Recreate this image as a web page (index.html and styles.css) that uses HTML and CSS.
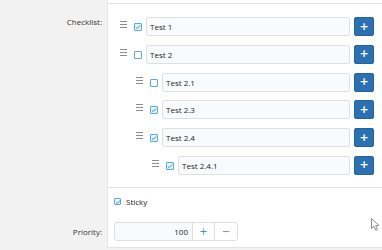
FILE: index.html
```html
<!DOCTYPE html>
<html>
<head>
<meta charset="utf-8">
<link rel="stylesheet" href="styles.css">
</head>
<body>
<div class="form">
  <div class="label"></div>
  <div class="field top-strip"></div>

  <div class="label label-checklist">Checklist:</div>
  <div class="field checklist-field">
    <div class="item lvl0">
      <span class="handle"><i></i><i></i><i></i></span>
      <span class="cb checked"><svg viewBox="0 0 8 8"><path d="M1.8 4.2 L3.3 5.6 L6.2 2.4"/></svg></span>
      <span class="text-input">Test 1</span>
      <button class="add">+</button>
    </div>
    <div class="item lvl0">
      <span class="handle"><i></i><i></i><i></i></span>
      <span class="cb"></span>
      <span class="text-input">Test 2</span>
      <button class="add">+</button>
    </div>
    <div class="item lvl1">
      <span class="handle"><i></i><i></i><i></i></span>
      <span class="cb"></span>
      <span class="text-input">Test 2.1</span>
      <button class="add">+</button>
    </div>
    <div class="item lvl1">
      <span class="handle"><i></i><i></i><i></i></span>
      <span class="cb checked"><svg viewBox="0 0 8 8"><path d="M1.8 4.2 L3.3 5.6 L6.2 2.4"/></svg></span>
      <span class="text-input">Test 2.3</span>
      <button class="add">+</button>
    </div>
    <div class="item lvl1">
      <span class="handle"><i></i><i></i><i></i></span>
      <span class="cb checked"><svg viewBox="0 0 8 8"><path d="M1.8 4.2 L3.3 5.6 L6.2 2.4"/></svg></span>
      <span class="text-input">Test 2.4</span>
      <button class="add">+</button>
    </div>
    <div class="item lvl2">
      <span class="handle"><i></i><i></i><i></i></span>
      <span class="cb checked"><svg viewBox="0 0 8 8"><path d="M1.8 4.2 L3.3 5.6 L6.2 2.4"/></svg></span>
      <span class="text-input">Test 2.4.1</span>
      <button class="add">+</button>
    </div>
  </div>

  <div class="label"></div>
  <div class="field sticky-field">
    <span class="cb checked"><svg viewBox="0 0 8 8"><path d="M1.8 4.2 L3.3 5.6 L6.2 2.4"/></svg></span>
    <span class="sticky-text">Sticky</span>
  </div>

  <div class="label label-priority">Priority:</div>
  <div class="field priority-field">
    <div class="spinner">
      <span class="num">100</span>
      <span class="spin-btn plus">+</span>
      <span class="spin-btn minus">&minus;</span>
    </div>
  </div>
</div>
<svg class="cursor" width="10" height="14" viewBox="0 0 10 14"><path d="M0.5 0.5 L0.5 10.5 L3 8.2 L4.8 12.3 L6.5 11.6 L4.8 7.6 L8 7.6 Z" fill="#fff" stroke="#8a8f96" stroke-width="1"/></svg>
</body>
</html>
```

FILE: styles.css
```css
html, body {
  margin: 0;
  padding: 0;
}
body {
  width: 382px;
  height: 250px;
  overflow: hidden;
  background: #f2f2f2;
  font-family: "Open Sans", "Noto Sans", sans-serif;
  font-size: 8px;
  color: #222;
  position: relative;
}
.form {
  display: grid;
  grid-template-columns: 107px 1fr;
}
.label {
  text-align: right;
  padding-right: 5px;
  color: #333;
}
.field {
  background: #fff;
  border-left: 1px solid #e6e6e6;
  padding-left: 12px;
  padding-right: 8px;
}
.top-strip {
  height: 3px;
  border-bottom: 1px solid #e3e3e3;
}
.label-checklist {
  padding-top: 12px;
  line-height: 12px;
}
.checklist-field {
  padding-top: 13px;
  padding-bottom: 12px;
  border-bottom: 1px solid #e3e3e3;
  display: flex;
  flex-direction: column;
  gap: 8.8px;
}
.item {
  display: flex;
  align-items: flex-start;
  height: 19px;
}
.lvl1 { padding-left: 16px; }
.lvl2 { padding-left: 32px; }
.handle {
  width: 7px;
  margin-right: 7px;
  margin-top: 4px;
  display: flex;
  flex-direction: column;
  gap: 2px;
}
.handle i {
  display: block;
  height: 1px;
  background: #8c8c8c;
}
.cb {
  box-sizing: border-box;
  width: 8px;
  height: 8px;
  border: 1px solid #5ba8e4;
  border-radius: 1px;
  background: #fff;
  display: flex;
  align-items: center;
  justify-content: center;
}
.item .cb {
  margin-top: 6px;
  margin-right: 4px;
}
.cb svg {
  width: 8px;
  height: 8px;
  flex: none;
}
.cb svg path {
  fill: none;
  stroke: #3d8fd8;
  stroke-width: 1;
}
.cb.checked {
  background: #eaf4fd;
}
.text-input {
  box-sizing: border-box;
  flex: 1;
  height: 19px;
  border: 1px solid #e0e0e0;
  border-radius: 2px;
  background: #f8fbfe;
  padding-left: 3px;
  line-height: 17px;
  color: #222;
}
.add {
  box-sizing: border-box;
  width: 20px;
  height: 19px;
  margin: 0 0 0 4px;
  padding: 0;
  border: 1px solid #22639e;
  border-radius: 2px;
  background: #2b71b1;
  color: #fff;
  font-family: "DejaVu Sans", sans-serif;
  font-size: 11px;
  font-weight: bold;
  line-height: 16px;
}
.sticky-field {
  padding-left: 6px;
  padding-top: 8px;
  height: 12px;
  display: flex;
  align-items: center;
}
.sticky-field .cb {
  width: 7px;
  height: 7px;
  margin-right: 5px;
}
.sticky-text {
  line-height: 12px;
}
.label-priority {
  padding-top: 14px;
  line-height: 19px;
}
.priority-field {
  padding-left: 6px;
  padding-top: 14px;
  padding-bottom: 6px;
  border-bottom: 1px solid #e3e3e3;
}
.spinner {
  display: flex;
  width: 124px;
  height: 19px;
  box-sizing: border-box;
  border: 1px solid #dedede;
  border-radius: 3px;
  background: #f8fbfe;
}
.num {
  width: 78px;
  text-align: right;
  padding-right: 4px;
  box-sizing: border-box;
  line-height: 17px;
  border-right: 1px solid #dedede;
}
.spin-btn {
  text-align: center;
  color: #3d8fd8;
  background: #fff;
  font-family: "DejaVu Sans", sans-serif;
  font-size: 10px;
  line-height: 17px;
}
.plus {
  width: 21px;
  border-right: 1px solid #dedede;
}
.minus {
  flex: 1;
  border-radius: 0 3px 3px 0;
}
.cursor {
  position: absolute;
  left: 371px;
  top: 218px;
}
```
